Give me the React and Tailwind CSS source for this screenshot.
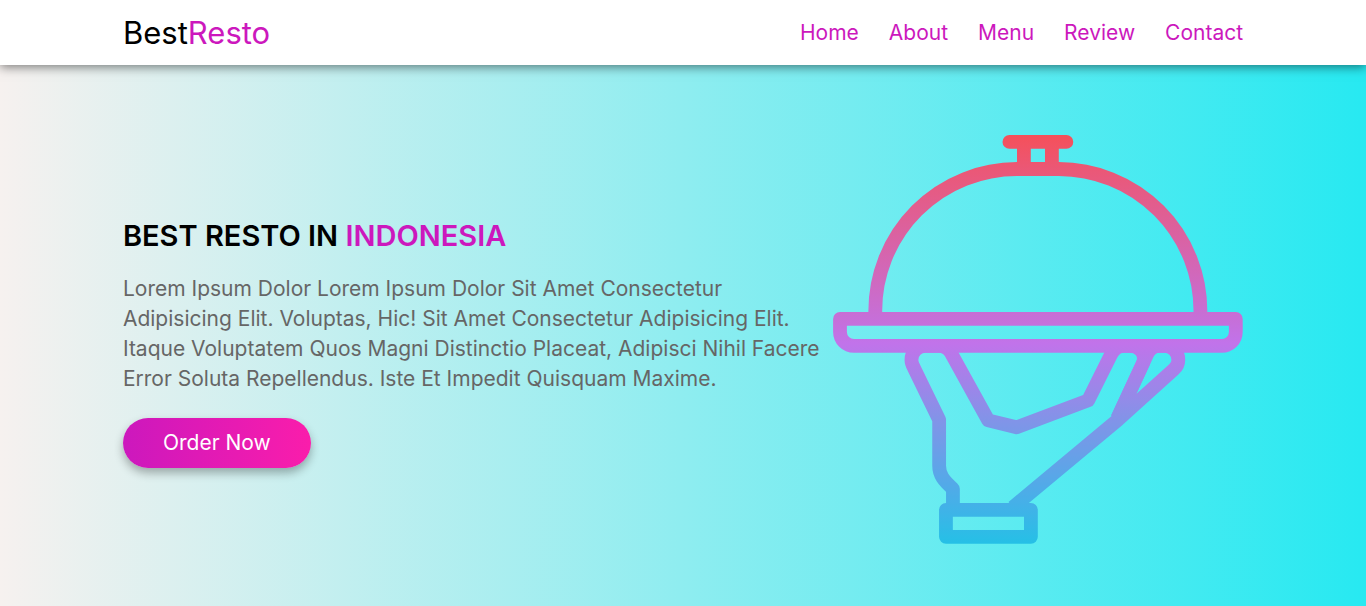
const links = ['Home', 'About', 'Menu', 'Review', 'Contact'];

function ServingTray() {
  return (
    <svg viewBox="0 0 410 410" className="w-[30vw] shrink-0" role="img" aria-label="Hand serving a covered dish">
      <defs>
        <linearGradient id="tray" gradientUnits="userSpaceOnUse" x1="0" y1="0" x2="0" y2="409">
          <stop offset="0" stopColor="#f5505a" />
          <stop offset="0.09" stopColor="#ea5878" />
          <stop offset="0.45" stopColor="#c66fd8" />
          <stop offset="0.51" stopColor="#c173ea" />
          <stop offset="0.7" stopColor="#8194e8" />
          <stop offset="0.9" stopColor="#45b0e8" />
          <stop offset="1" stopColor="#25c0e6" />
        </linearGradient>
      </defs>
      <g fill="none" stroke="url(#tray)" strokeWidth="13.8" strokeLinejoin="round">
        <path d="M176.5 6.9H233.5" strokeLinecap="round" />
        <path d="M191 7V34M219 7V34" />
        <path d="M42.3 184V176A142 142 0 0 1 184 34H226A142 142 0 0 1 367.6 176V184" />
        <path d="M7 184H403V197a14 14 0 0 1-14 14H21a14 14 0 0 1-14-14Z" />
        <path d="M120 375V354C110.5 345.5 106.2 340 106.2 331V285L81 233Q78.5 228.5 78.5 225a14 14 0 0 1 14-14H106a14 14 0 0 1 12 7L155.3 285.5L183.7 292.5L255.3 265.5L278 220Q282.5 211 291 211H296.5C306 211 313.500 218 310.3 228L284.5 283.5" />
        <path d="M284.5 283.5L314 220Q318 211 326.5 211H331.5a14 14 0 0 1 14 14Q345.5 230.5 341 234.5L285 285L180 372.5" />
        <path d="M113 375H198V402H113Z" />
      </g>
    </svg>
  );
}

export default function App() {
  return (
    <div className="flex min-h-screen flex-col bg-linear-to-r/srgb from-[#f6f1ef] to-[#27e9f1] font-['Inter','Noto_Sans',sans-serif]">
      <header className="flex items-center justify-between bg-white px-[9%] py-2.5 shadow-[0_2px_10px_rgba(0,0,0,0.5)]">
        <a href="#home" className="text-[31px] leading-[45px] text-black">
          Best<span className="text-[#cc18bd]">Resto</span>
        </a>
        <nav className="flex gap-[30px] text-[21px] leading-[30px] text-[#cc18bd]">
          {links.map((label) => (
            <a key={label} href={`#${label.toLowerCase()}`}>{label}</a>
          ))}
        </nav>
      </header>
      <main id="home" className="flex flex-1 items-center px-[9%] pt-[70px] pb-[61px]">
        <div className="flex-1">
          <h1 className="text-[29px] leading-[45px] font-semibold text-black uppercase">
            Best Resto in <span className="text-[#cc18bd]">Indonesia</span>
          </h1>
          <p className="py-4 text-[21px] leading-[30px] text-[#666666]">
            Lorem Ipsum Dolor Lorem Ipsum Dolor Sit Amet Consectetur Adipisicing Elit. Voluptas, Hic! Sit Amet
            Consectetur Adipisicing Elit. Itaque Voluptatem Quos Magni Distinctio Placeat, Adipisci Nihil Facere
            Error Soluta Repellendus. Iste Et Impedit Quisquam Maxime.
          </p>
          <button
            type="button"
            className="mt-2 rounded-full bg-linear-to-r/srgb from-[#cc18bd] to-[#fa1dab] px-10 py-2.5 text-[21px] leading-[30px] text-white shadow-[0_5px_10px_rgba(0,0,0,0.3)]"
          >
            Order Now
          </button>
        </div>
        <ServingTray />
      </main>
    </div>
  );
}
